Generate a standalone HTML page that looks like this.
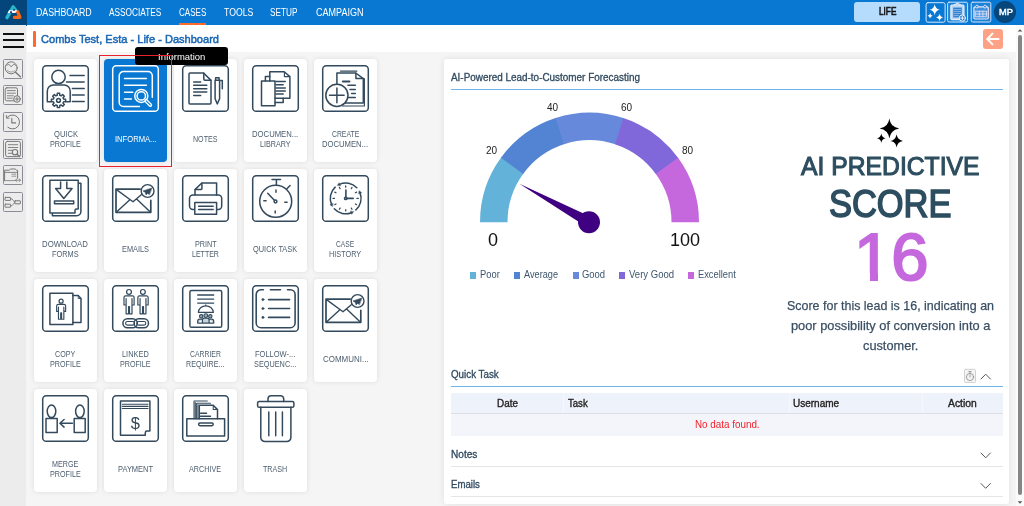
<!DOCTYPE html>
<html lang="en">
<head>
<meta charset="utf-8">
<title>Combs Test, Esta - Life - Dashboard</title>
<style>
*{box-sizing:border-box;margin:0;padding:0}
html,body{width:1024px;height:506px;overflow:hidden}
body{position:relative;background:#f5f5f5;font-family:"Liberation Sans",sans-serif;color:#34495e}
#root{position:absolute;left:0;top:0;width:1024px;height:506px;overflow:hidden;will-change:transform}
.abs{position:absolute}
.t{position:absolute;white-space:nowrap;transform-origin:0 50%}
/* top bar */
#topbar{position:absolute;left:0;top:0;width:1024px;height:25.5px;background:#0878d2}
#logo{position:absolute;left:0;top:0;width:26.8px;height:25.3px;background:#04467c}
.nav{position:absolute;top:0;height:25px;line-height:24px;color:#fff;font-size:10.3px;white-space:nowrap;letter-spacing:-0.15px}
#navul{position:absolute;left:178.9px;top:23.1px;width:27.2px;height:2.4px;background:#ff6a2b}
#life{position:absolute;left:854.1px;top:1.6px;width:66.2px;height:20.6px;background:#b5dcfd;border-radius:3px}
.tbtn{position:absolute;top:2px;width:21px;height:21px;border:1px solid #e6f2fc;border-radius:2px}
#avatar{position:absolute;left:994.2px;top:0.7px;width:22px;height:22px;border-radius:50%;background:#06467b}
/* sub header */
#subhdr{position:absolute;left:27px;top:25px;width:989px;height:27px;background:#fff}
#sidebar{position:absolute;left:0;top:25px;width:26.4px;height:481px;background:#ececec}
#obar{position:absolute;left:33px;top:31px;width:3px;height:16px;background:#ff6a2b;border-radius:1px}
#title{position:absolute;left:40px;top:30px;height:18px;line-height:18px;font-size:11.6px;font-weight:bold;color:#1e64a8;white-space:nowrap}
#back{position:absolute;left:983px;top:29px;width:20px;height:20px;border-radius:3px;background:#fea184}
.ham{position:absolute;left:3px;width:21px;height:2px;background:#111}
.sbi{position:absolute;left:2.9px;width:20.1px;height:20px;border:1px solid #8b8d96;border-radius:1.5px;background:#ececec}
/* cards */
.card{position:absolute;width:63px;height:102.5px;background:#fff;border-radius:4px;box-shadow:0 0 5px rgba(0,0,0,.10)}
.card svg{position:absolute;left:8.1px;top:6.35px;width:47px;height:47px;overflow:visible}
.card .lb{position:absolute;left:0;top:60px;width:63px;height:40px;display:flex;align-items:center;justify-content:center;text-align:center;font-size:8.4px;line-height:10px;color:#4b5d6d;white-space:pre-line}
.card.sel{background:#0878d2;width:63.5px;height:102.8px}
.card.sel .lb{color:#fff}
#selbox{position:absolute;left:98.7px;top:55.4px;width:73.4px;height:111.5px;border:1.8px solid #ea212d}
#tip{position:absolute;left:135px;top:47.2px;width:93.4px;height:18.2px;background:#000;border-radius:3px}
/* panel */
#panel{position:absolute;left:444px;top:59px;width:565.3px;height:444.8px;background:#fff;border-radius:3px;box-shadow:0 0 7px rgba(0,0,0,.09)}
.sect{position:absolute;left:451px;font-size:10px;color:#2c3e50;white-space:nowrap;-webkit-text-stroke:0.25px #2c3e50}
.hl{position:absolute;left:451px;width:552px;height:1px}
.gl{position:absolute;font-size:10.5px;color:#222;white-space:nowrap;transform:translate(-50%,-50%)}
.lg{position:absolute;top:269px;font-size:9.8px;color:#3f556b;white-space:nowrap;line-height:12px}
.lg i{display:inline-block;width:6px;height:6px;margin-right:4px;vertical-align:0px}
.ctr{position:absolute;left:770px;width:240px;text-align:center;white-space:nowrap}
.th{position:absolute;top:393px;height:20px;line-height:20px;font-size:10px;font-weight:bold;color:#222}
/* scrollbar */
#sbar{position:absolute;left:1016px;top:25px;width:8px;height:481px;background:#fafafa}
#thumb{position:absolute;left:1017.7px;top:35.2px;width:4.6px;height:459.8px;background:#858585;border-radius:2.3px}
</style>
</head>
<body>
<div id="root">
<div id="topbar"></div>
<div id="logo"><svg width="27" height="25" viewBox="0 0 27 25" fill="none" stroke-linecap="round" stroke-linejoin="round" style="position:absolute;left:0;top:0">
<path d="M7 17.6L13.2 6.9L15.8 10.4" stroke="#2bb6c9" stroke-width="3.4"/>
<path d="M17.6 11.6L19.9 17.3H14.4" stroke="#f3691c" stroke-width="3.3"/>
<path d="M9 10.2H17.2L15.4 13H7.6Z" fill="#fff"/>
<path d="M11 10.8L12.3 12.2L11 13.6L9.7 12.2ZM14 8.7L15.2 9.9L14 11.1L12.8 9.9Z" fill="#1a2c7a"/>
</svg></div>
<div class="t" style="left:36px;top:6px;font-size:10.0px;line-height:13px;height:13px;transform:scaleX(0.8793);color:#fff;">DASHBOARD</div><div class="t" style="left:109px;top:6px;font-size:10.0px;line-height:13px;height:13px;transform:scaleX(0.8296);color:#fff;">ASSOCIATES</div><div class="t" style="left:179px;top:6px;font-size:10.0px;line-height:13px;height:13px;transform:scaleX(0.8053);color:#fff;">CASES</div><div class="t" style="left:224px;top:6px;font-size:10.0px;line-height:13px;height:13px;transform:scaleX(0.8690);color:#fff;">TOOLS</div><div class="t" style="left:270px;top:6px;font-size:10.0px;line-height:13px;height:13px;transform:scaleX(0.8218);color:#fff;">SETUP</div><div class="t" style="left:316px;top:6px;font-size:10.0px;line-height:13px;height:13px;transform:scaleX(0.9031);color:#fff;">CAMPAIGN</div>
<div id="navul"></div>
<div id="life"></div><div class="t" style="left:879px;top:5px;font-size:10.3px;line-height:13px;height:13px;transform:scaleX(0.7999);color:#111;-webkit-text-stroke:0.6px #111;">LIFE</div>
<svg class="abs" style="left:922px;top:0" width="72" height="25" viewBox="922 0 72 25" fill="none" stroke-linecap="round" stroke-linejoin="round">
<rect x="926.1" y="2.7" width="19" height="19.5" rx="1.8" stroke="#d6eafb" stroke-width="1"/>
<path d="M934.70 4.30Q935.39 9.09 940.00 9.80Q935.39 10.52 934.70 15.30Q934.01 10.52 929.40 9.80Q934.01 9.09 934.70 4.30ZM930.10 12.90Q930.44 15.34 932.70 15.70Q930.44 16.06 930.10 18.50Q929.76 16.06 927.50 15.70Q929.76 15.34 930.10 12.90ZM939.60 13.60Q940.07 16.91 943.20 17.40Q940.07 17.89 939.60 21.20Q939.13 17.89 936.00 17.40Q939.13 16.91 939.60 13.60Z" fill="#fff"/>
<rect x="947.6" y="2.2" width="20" height="19.8" rx="1.5" stroke="#cfe4fb" stroke-width="1" fill="#1b84d8"/>
<rect x="950.9" y="5.2" width="13" height="14.4" rx="1" stroke="#e4eefb" stroke-width="1.3" fill="#b9d3f0"/>
<rect x="953.3" y="7.6" width="8.4" height="9.8" fill="#2a7fd0" stroke="none"/>
<path d="M954.4 9.6H960.6M954.4 11.6H960.6M954.4 13.6H960.6M954.4 15.6H958.5" stroke="#9cc3ec" stroke-width="0.8"/>
<path d="M954.6 5.2V4.2H956.2a1.2 1.2 0 0 1 2.4 0H960.2V5.2" stroke="#e4eefb" stroke-width="1" fill="#b9d3f0"/>
<circle cx="962.3" cy="18.1" r="3.1" fill="#1b78cc" stroke="#fff" stroke-width="0.9"/><path d="M960.6 18.1H964M962.3 16.4V19.8" stroke="#fff" stroke-width="0.9"/>
<rect x="971.2" y="2.2" width="19.6" height="19.8" rx="1.5" stroke="#d9e2fb" stroke-width="1" fill="#1b84d8"/>
<rect x="973.9" y="6.8" width="14.4" height="12.2" rx="1.2" stroke="#e6e9fd" stroke-width="1.2" fill="#3f8fdc"/>
<rect x="975.6" y="11.2" width="11" height="5.6" fill="#5a9ae0" stroke="#dfe4fb" stroke-width="0.9"/>
<path d="M979.3 11.2V16.8M982.9 11.2V16.8M975.6 14H986.6" stroke="#dfe4fb" stroke-width="0.8"/>
<circle cx="977" cy="6.6" r="1.4" stroke="#e6e9fd" stroke-width="0.9" fill="#1b78cc"/><circle cx="985.1" cy="6.6" r="1.4" stroke="#e6e9fd" stroke-width="0.9" fill="#1b78cc"/>
</svg>

<div id="avatar"></div><div class="t" style="left:999px;top:6px;font-size:9.2px;line-height:12px;height:12px;transform:scaleX(1.0072);color:#fff;-webkit-text-stroke:0.45px #fff;">MP</div>

<div id="subhdr"></div>
<div id="sidebar"></div>
<div class="ham" style="top:32.6px"></div>
<div class="ham" style="top:39.1px"></div>
<div class="ham" style="top:45.6px"></div>
<div id="obar"></div>
<div class="t" style="left:41px;top:31px;font-size:11.6px;line-height:16px;height:16px;transform:scaleX(0.9536);color:#1a66b3;-webkit-text-stroke:0.5px #1a66b3;">Combs Test, Esta - Life - Dashboard</div>
<div id="back"><svg width="20" height="20" viewBox="0 0 20 20" fill="none" stroke="#fff" stroke-width="1.9" stroke-linecap="butt" stroke-linejoin="miter" style="position:absolute;left:0;top:0"><path d="M16.3 10H4.6M10 4.2L4.2 10L10 15.8"/></svg></div>

<div class="sbi" style="top:58.5px"><svg viewBox="0 0 20 20" width="20" height="20" fill="none" stroke="#777" stroke-width="1" stroke-linecap="round" stroke-linejoin="round" style="position:absolute;left:-1px;top:-1px"><circle cx="8.2" cy="8.8" r="6"/><path d="M12.6 13.2L17.4 17.8" stroke-width="1.4"/><path d="M4 6.4C4.8 4.6 6 5 8.2 7.8C10.4 5 11.6 4.6 12.4 6.4" stroke-width="1"/><path d="M4.4 11.4C6.4 13.6 10 13.6 12 11.4" stroke-width="0.8" stroke="#8e8e8e"/></svg></div>
<div class="sbi" style="top:85.2px"><svg viewBox="0 0 20 20" width="20" height="20" fill="none" stroke="#777" stroke-width="1" stroke-linecap="round" stroke-linejoin="round" style="position:absolute;left:-1px;top:-1px"><rect x="2.2" y="2.8" width="12.3" height="13" rx="1.6"/><path d="M4.3 5.6H12.4M4.3 8.2H12.4M4.3 10.8H10.4M4.3 13.2H9.4" stroke-width="0.9"/><circle cx="14" cy="14" r="3.3" fill="#e6e6e6"/><path d="M12.2 14H15.8M14 12.2V15.8" stroke-width="0.9"/></svg></div>
<div class="sbi" style="top:111.9px"><svg viewBox="0 0 20 20" width="20" height="20" fill="none" stroke="#777" stroke-width="1" stroke-linecap="round" stroke-linejoin="round" style="position:absolute;left:-1px;top:-1px"><path d="M4.2 5.4A7 7 0 1 1 4.8 15.2"/><path d="M3.4 3.4V6.2H6.2" stroke-width="0.9"/><path d="M8.8 6.2V10.9H12.6" stroke-width="1.1"/></svg></div>
<div class="sbi" style="top:138.6px"><svg viewBox="0 0 20 20" width="20" height="20" fill="none" stroke="#777" stroke-width="1" stroke-linecap="round" stroke-linejoin="round" style="position:absolute;left:-1px;top:-1px"><rect x="2.6" y="2.4" width="14.8" height="15.2" rx="1.8"/><path d="M5.3 5.7H14.7M5.3 8.5H14.7M5.3 11.3H9.6M5.3 14.3H9" stroke-width="0.9"/><circle cx="12" cy="13.2" r="2.7" stroke-width="1.1"/><path d="M14 15.2L16.6 17.6" stroke-width="1.4"/></svg></div>
<div class="sbi" style="top:165.3px"><svg viewBox="0 0 20 20" width="20" height="20" fill="none" stroke="#777" stroke-width="1" stroke-linecap="round" stroke-linejoin="round" style="position:absolute;left:-1px;top:-1px"><path d="M1.6 15.6V5.2H6.2L7.6 4H12.2L13.4 5.2H14.6V13.2"/><path d="M1.8 7.4H14.4" stroke-width="0.9"/><path d="M9 9.2H13.6M9 11.2H13.6" stroke-width="0.8" stroke-dasharray="1.4 1"/><path d="M1.6 15.6H12M12.6 15.2H17.4M13.8 13.9L12.4 15.2L13.8 16.5M16.2 13.9L17.6 15.2L16.2 16.5" stroke-width="0.8"/></svg></div>
<div class="sbi" style="top:192.0px"><svg viewBox="0 0 20 20" width="20" height="20" fill="none" stroke="#777" stroke-width="1" stroke-linecap="round" stroke-linejoin="round" style="position:absolute;left:-1px;top:-1px"><rect x="2" y="5.4" width="5.6" height="3" rx="0.4"/><rect x="2" y="12.2" width="5.6" height="3" rx="0.4"/><rect x="11.8" y="8.8" width="5.6" height="3" rx="0.4"/><path d="M7.6 6.9H9L11.8 10.3L9 13.7H7.6" stroke-width="0.8"/></svg></div>

<div class="card" style="left:33.5px;top:59px"><svg viewBox="0 0 47 47" fill="none" stroke="#33495c" color="#33495c" stroke-width="1.5" stroke-linecap="round" stroke-linejoin="round"><rect x="0.7" y="0.7" width="45.6" height="45.6" rx="3.6"/><circle cx="16.5" cy="11.9" r="6.7"/>
<path d="M9.3 36.7H5.3V26a6 6 0 0 1 6-6H22.2a6 6 0 0 1 6 6V36.7H23.8"/>
<path d="M21.64 34.12L23.60 34.22L23.60 36.58L21.64 36.68L21.04 38.13L22.36 39.59L20.69 41.26L19.23 39.94L17.78 40.54L17.68 42.50L15.32 42.50L15.22 40.54L13.77 39.94L12.31 41.26L10.64 39.59L11.96 38.13L11.36 36.68L9.40 36.58L9.40 34.22L11.36 34.12L11.96 32.67L10.64 31.21L12.31 29.54L13.77 30.86L15.22 30.26L15.32 28.30L17.68 28.30L17.78 30.26L19.23 30.86L20.69 29.54L22.36 31.21L21.04 32.67Z" fill="#fff"/><circle cx="16.5" cy="35.4" r="1.9"/>
<path d="M28 10.6H42.2M24.5 17H42.2M30.4 23.4H42.2M30.4 29.9H42.2M30.4 36.5H42.2" stroke-width="1.47"/></svg></div>
<div class="t" style="left:54px;top:128px;font-size:8.4px;line-height:12px;height:12px;transform:scaleX(0.9022);color:#4d5e6e;">QUICK</div>
<div class="t" style="left:50px;top:138px;font-size:8.4px;line-height:12px;height:12px;transform:scaleX(0.8625);color:#4d5e6e;">PROFILE</div>
<div class="card sel" style="left:103.5px;top:59px"><svg viewBox="0 0 47 47" fill="none" stroke="#fff" color="#fff" stroke-width="1.5" stroke-linecap="round" stroke-linejoin="round"><rect x="0.7" y="0.7" width="45.6" height="45.6" rx="3.6"/><path d="M40.3 32.2V10.7a4.3 4.3 0 0 0-4.3-4.3H11.5a4.3 4.3 0 0 0-4.3 4.3V37.3a4.3 4.3 0 0 0 4.3 4.3H27.4"/>
<path d="M12.5 13.5H34.4M12.5 20.3H34.4M12.5 27.2H20.8M12.5 34H19.4" stroke-width="1.47"/>
<circle cx="29.3" cy="30.9" r="6.5"/><circle cx="29.3" cy="30.9" r="4.2"/>
<path d="M34.2 35.9L38.4 40.1" stroke-width="3.62"/><path d="M34.4 36.1L38.2 39.9" stroke="#0878d2" stroke-width="1.13"/></svg></div>
<div class="t" style="left:115px;top:133px;font-size:8.4px;line-height:12px;height:12px;transform:scaleX(0.9096);color:#fff;">INFORMA...</div>
<div class="card" style="left:173.5px;top:59px"><svg viewBox="0 0 47 47" fill="none" stroke="#33495c" color="#33495c" stroke-width="1.5" stroke-linecap="round" stroke-linejoin="round"><rect x="0.7" y="0.7" width="45.6" height="45.6" rx="3.6"/><path d="M21.6 8H8a1 1 0 0 0-1 1V37.9a1 1 0 0 0 1 1H28a1 1 0 0 0 1-1V15.4Z"/>
<path d="M21.8 8.3V14a1.2 1.2 0 0 0 1.2 1.2H28.8"/>
<path d="M11.7 17.1H18.7M11.7 20.3H24.8M11.7 23.7H24.8M11.7 27H24.8M11.7 30.4H18.7" stroke-width="1.47"/>
<path d="M33.1 15.2V33.8L35.3 38.9L37.6 33.8V15.2ZM33.6 15.2V12.8H37.1V15.2M37.6 15.4H40.3V23.7"/></svg></div>
<div class="t" style="left:193px;top:133px;font-size:8.4px;line-height:12px;height:12px;transform:scaleX(0.8467);color:#4d5e6e;">NOTES</div>
<div class="card" style="left:243.5px;top:59px"><svg viewBox="0 0 47 47" fill="none" stroke="#33495c" color="#33495c" stroke-width="1.5" stroke-linecap="round" stroke-linejoin="round"><rect x="0.7" y="0.7" width="45.6" height="45.6" rx="3.6"/><path d="M17.8 16V6.8H32.2L37.9 11.6V33.3H23"/>
<path d="M32.4 7.2V11.6H37.6" stroke-width="1.13"/>
<path d="M17.8 11.4H13.4V16M23 37.5H31.2V33.3"/>
<rect x="9.5" y="16" width="13.5" height="24.8"/>
<path d="M24 16.5H33.3M24 19.7H31.2M24 22.9H33.3M24 26H33.3M24 29H31.2" stroke-width="1.47"/></svg></div>
<div class="t" style="left:252px;top:128px;font-size:8.4px;line-height:12px;height:12px;transform:scaleX(0.9206);color:#4d5e6e;">DOCUMEN...</div>
<div class="t" style="left:260px;top:138px;font-size:8.4px;line-height:12px;height:12px;transform:scaleX(0.8577);color:#4d5e6e;">LIBRARY</div>
<div class="card" style="left:313.5px;top:59px"><svg viewBox="0 0 47 47" fill="none" stroke="#33495c" color="#33495c" stroke-width="1.5" stroke-linecap="round" stroke-linejoin="round"><rect x="0.7" y="0.7" width="45.6" height="45.6" rx="3.6"/><path d="M18.4 6.1H34.9M42.4 13.5V41H20.5" stroke-width="1.13"/>
<path d="M14.9 19.2V8H33.8L41.3 13.6V38.1H22"/>
<path d="M33.9 8.2V13.5H41.2"/>
<path d="M20.8 16.5H27.5" stroke-width="1.81"/><path d="M25.9 20.3H33.3M28 24.5H33.3M29.6 28.5H33.3M26.6 32.5H33.3" stroke-width="1.47"/>
<circle cx="14.9" cy="30.3" r="11.1" fill="#fff"/>
<path d="M7.5 30.3H22.1M14.9 22.9V37.8"/></svg></div>
<div class="t" style="left:332px;top:128px;font-size:8.4px;line-height:12px;height:12px;transform:scaleX(0.8162);color:#4d5e6e;">CREATE</div>
<div class="t" style="left:322px;top:138px;font-size:8.4px;line-height:12px;height:12px;transform:scaleX(0.9167);color:#4d5e6e;">DOCUMEN...</div>
<div class="card" style="left:33.5px;top:169px"><svg viewBox="0 0 47 47" fill="none" stroke="#33495c" color="#33495c" stroke-width="1.5" stroke-linecap="round" stroke-linejoin="round"><rect x="0.7" y="0.7" width="45.6" height="45.6" rx="3.6"/><path d="M36.2 8.2H38.9V36.6a4.2 4.2 0 0 1-4.2 4.2H10.4V38.1"/>
<path d="M7.9 5.3H36.2V34.1H34.4a1.4 1.4 0 0 0-1.4 1.4V38.1H7.9Z" fill="#fff"/>
<path d="M18.6 7.1V13.5H13.6L21.8 23.5L30.1 13.5H24.8V7.1"/>
<rect x="12.5" y="26.1" width="19.2" height="2.6"/></svg></div>
<div class="t" style="left:42px;top:238px;font-size:8.4px;line-height:12px;height:12px;transform:scaleX(0.9319);color:#4d5e6e;">DOWNLOAD</div>
<div class="t" style="left:52px;top:248px;font-size:8.4px;line-height:12px;height:12px;transform:scaleX(0.8803);color:#4d5e6e;">FORMS</div>
<div class="card" style="left:103.5px;top:169px"><svg viewBox="0 0 47 47" fill="none" stroke="#33495c" color="#33495c" stroke-width="1.5" stroke-linecap="round" stroke-linejoin="round"><rect x="0.7" y="0.7" width="45.6" height="45.6" rx="3.6"/><path d="M28.2 14.1H4V37.3H38.8V25.4" stroke-width="1.7"/>
<path d="M4.5 14.6L21 26.7L29.3 19.8M4.5 37L17.6 25M38.3 37L24.6 24" stroke-width="1.4"/>
<circle cx="35.6" cy="16" r="6.4" stroke-width="1.4"/>
<path d="M39.8 13L30.9 15.9L33.3 17.4L34 20.1L35.5 18.4L37.3 19.5Z" fill="currentColor" stroke-width="0.5"/></svg></div>
<div class="t" style="left:122px;top:243px;font-size:8.4px;line-height:12px;height:12px;transform:scaleX(0.8763);color:#4d5e6e;">EMAILS</div>
<div class="card" style="left:173.5px;top:169px"><svg viewBox="0 0 47 47" fill="none" stroke="#33495c" color="#33495c" stroke-width="1.5" stroke-linecap="round" stroke-linejoin="round"><rect x="0.7" y="0.7" width="45.6" height="45.6" rx="3.6"/><path d="M13 20V14.6L19.8 8H34.6V20"/>
<path d="M19.9 8.3V13.4a1.2 1.2 0 0 1-1.2 1.2H13.3"/>
<rect x="7.5" y="20" width="32.2" height="14.4" rx="3.4"/>
<rect x="12.8" y="27.4" width="21.8" height="11.8" fill="#fff"/>
<path d="M16.6 31.2H31.2M16.6 34.6H31.2" stroke-width="1.47"/></svg></div>
<div class="t" style="left:195px;top:238px;font-size:8.4px;line-height:12px;height:12px;transform:scaleX(0.8651);color:#4d5e6e;">PRINT</div>
<div class="t" style="left:192px;top:248px;font-size:8.4px;line-height:12px;height:12px;transform:scaleX(0.8384);color:#4d5e6e;">LETTER</div>
<div class="card" style="left:243.5px;top:169px"><svg viewBox="0 0 47 47" fill="none" stroke="#33495c" color="#33495c" stroke-width="1.5" stroke-linecap="round" stroke-linejoin="round"><rect x="0.7" y="0.7" width="45.6" height="45.6" rx="3.6"/><circle cx="23.7" cy="26.3" r="16"/>
<path d="M20 4.5H28.5M24.4 4.5V10.2M34.9 13.8L38.1 10.5"/>
<path d="M24 15.1V17.3M23.2 36V38.1M11.8 25.8H14.1M32.8 27.2H35.1" stroke-width="1.47"/>
<path d="M15.7 18.3L22.6 25.4"/><circle cx="23.5" cy="26.5" r="1.4"/></svg></div>
<div class="t" style="left:253px;top:243px;font-size:8.4px;line-height:12px;height:12px;transform:scaleX(0.8842);color:#4d5e6e;">QUICK TASK</div>
<div class="card" style="left:313.5px;top:169px"><svg viewBox="0 0 47 47" fill="none" stroke="#33495c" color="#33495c" stroke-width="1.5" stroke-linecap="round" stroke-linejoin="round"><rect x="0.7" y="0.7" width="45.6" height="45.6" rx="3.6"/><path d="M17.44 9.33A15.4 15.4 0 0 1 34.78 12.70"/>
<path d="M15.43 10.23L17.15 7.71L18.45 10.63Z" fill="currentColor" stroke-width="0.4"/>
<path d="M38.08 17.88A15.4 15.4 0 0 1 33.80 35.02"/>
<path d="M37.29 15.83L39.71 17.68L36.73 18.83Z" fill="currentColor" stroke-width="0.4"/>
<path d="M29.47 37.68A15.4 15.4 0 0 1 12.26 33.70"/>
<path d="M31.51 36.85L29.70 39.31L28.50 36.34Z" fill="currentColor" stroke-width="0.4"/>
<path d="M9.52 29.42A15.4 15.4 0 0 1 13.20 12.14"/>
<path d="M10.38 31.44L7.90 29.67L10.84 28.42Z" fill="currentColor" stroke-width="0.4"/>
<path d="M34.90 23.40L36.30 23.40M33.40 29.00L34.61 29.70M29.30 33.10L30.00 34.31M23.70 34.60L23.70 36.00M18.10 33.10L17.40 34.31M14.00 29.00L12.79 29.70M12.50 23.40L11.10 23.40M14.00 17.80L12.79 17.10M18.10 13.70L17.40 12.49M23.70 12.20L23.70 10.80M29.30 13.70L30.00 12.49M33.40 17.80L34.61 17.10" stroke-width="1.24"/>
<path d="M23.9 15.1V22.2M25 23.4H31.2" stroke-width="1.58"/><circle cx="23.7" cy="23.4" r="1.2"/></svg></div>
<div class="t" style="left:336px;top:238px;font-size:8.4px;line-height:12px;height:12px;transform:scaleX(0.7913);color:#4d5e6e;">CASE</div>
<div class="t" style="left:329px;top:248px;font-size:8.4px;line-height:12px;height:12px;transform:scaleX(0.8722);color:#4d5e6e;">HISTORY</div>
<div class="card" style="left:33.5px;top:279px"><svg viewBox="0 0 47 47" fill="none" stroke="#33495c" color="#33495c" stroke-width="1.5" stroke-linecap="round" stroke-linejoin="round"><rect x="0.7" y="0.7" width="45.6" height="45.6" rx="3.6"/><path d="M30.9 10.6H36.2L39 13.5V37.5H30.9"/><path d="M36.2 10.8V13.5H38.8" stroke-width="0.90"/>
<rect x="7.9" y="8.2" width="23" height="31.3"/>
<circle cx="19.1" cy="16.2" r="2" stroke-width="1.24"/>
<path d="M16.25 19.4H22.05a1.6 1.6 0 0 1 1.6 1.6V26.4H21.85V34.3H19.60V27.9H18.70V34.3H16.45V26.4H14.65V21.0a1.6 1.6 0 0 1 1.6 -1.6ZM16.45 22.0V26.4M21.85 22.0V26.4" stroke-width="1.13"/></svg></div>
<div class="t" style="left:55px;top:348px;font-size:8.4px;line-height:12px;height:12px;transform:scaleX(0.8527);color:#4d5e6e;">COPY</div>
<div class="t" style="left:50px;top:358px;font-size:8.4px;line-height:12px;height:12px;transform:scaleX(0.8597);color:#4d5e6e;">PROFILE</div>
<div class="card" style="left:103.5px;top:279px"><svg viewBox="0 0 47 47" fill="none" stroke="#33495c" color="#33495c" stroke-width="1.5" stroke-linecap="round" stroke-linejoin="round"><rect x="0.7" y="0.7" width="45.6" height="45.6" rx="3.6"/><circle cx="17" cy="6.9" r="2.4" stroke-width="1.24"/><circle cx="30.9" cy="6.9" r="2.4" stroke-width="1.24"/>
<path d="M13.60 10.9H20.50a1.6 1.6 0 0 1 1.6 1.6V20H20.00V28.8H17.50V21.5H16.60V28.8H14.10V20H12.00V12.5a1.6 1.6 0 0 1 1.6 -1.6ZM14.10 13.5V20M20.00 13.5V20" stroke-width="1.19"/>
<path d="M27.45 10.9H34.55a1.6 1.6 0 0 1 1.6 1.6V20H33.95V28.8H31.45V21.5H30.55V28.8H28.05V20H25.85V12.5a1.6 1.6 0 0 1 1.6 -1.6ZM28.05 13.5V20M33.95 13.5V20" stroke-width="1.19"/>
<rect x="10.9" y="33.8" width="14.4" height="9" rx="4.5"/><rect x="13.6" y="36.5" width="9" height="3.6" rx="1.8" stroke-width="1.13"/>
<rect x="22.1" y="33.8" width="14.4" height="9" rx="4.5"/><rect x="24.8" y="36.5" width="9" height="3.6" rx="1.8" stroke-width="1.13"/></svg></div>
<div class="t" style="left:122px;top:348px;font-size:8.4px;line-height:12px;height:12px;transform:scaleX(0.8832);color:#4d5e6e;">LINKED</div>
<div class="t" style="left:120px;top:358px;font-size:8.4px;line-height:12px;height:12px;transform:scaleX(0.8542);color:#4d5e6e;">PROFILE</div>
<div class="card" style="left:173.5px;top:279px"><svg viewBox="0 0 47 47" fill="none" stroke="#33495c" color="#33495c" stroke-width="1.5" stroke-linecap="round" stroke-linejoin="round"><rect x="0.7" y="0.7" width="45.6" height="45.6" rx="3.6"/><rect x="7.9" y="5.5" width="31.8" height="36.8" rx="1.6" stroke-width="1.47"/>
<path d="M15.7 10H31.7M15.7 14.1H31.7M15.7 18.1H31.7" stroke-width="1.36"/>
<path d="M16.4 27.4A7.4 6.6 0 0 1 31.3 27.4ZM23.8 20.6V19.9" stroke-width="1.24"/>
<circle cx="19.2" cy="31.3" r="1.7" stroke-width="1.13" fill="#9fb0bb"/><circle cx="23.8" cy="30.6" r="1.9" stroke-width="1.13" fill="#9fb0bb"/><circle cx="28.3" cy="31.3" r="1.7" stroke-width="1.13" fill="#9fb0bb"/>
<path d="M15.7 38.1V36.2a2 2 0 0 1 2-2H20.6M31.7 38.1V36.2a2 2 0 0 0-2-2H26.9M20.4 38.1V35.2a2 2 0 0 1 2-2H25.1a2 2 0 0 1 2 2V38.1M15.7 38.1H31.7" stroke-width="1.24" fill="#c9d3da"/></svg></div>
<div class="t" style="left:190px;top:348px;font-size:8.4px;line-height:12px;height:12px;transform:scaleX(0.8200);color:#4d5e6e;">CARRIER</div>
<div class="t" style="left:186px;top:358px;font-size:8.4px;line-height:12px;height:12px;transform:scaleX(0.8526);color:#4d5e6e;">REQUIRE...</div>
<div class="card" style="left:243.5px;top:279px"><svg viewBox="0 0 47 47" fill="none" stroke="#33495c" color="#33495c" stroke-width="1.5" stroke-linecap="round" stroke-linejoin="round"><rect x="0.7" y="0.7" width="45.6" height="45.6" rx="3.6"/><path d="M11.4 4.7H9a4.8 4.8 0 0 0-4.8 4.8V37.9a4.8 4.8 0 0 0 4.8 4.8H38.3a4.8 4.8 0 0 0 4.8-4.8V9.5a4.8 4.8 0 0 0-4.8-4.8H35.5M18.4 4.7H28.5" stroke-width="1.58"/>
<circle cx="10.9" cy="14.6" r="1.1" fill="currentColor" stroke-width="0.6"/><circle cx="10.9" cy="23.5" r="1.1" fill="currentColor" stroke-width="0.6"/><circle cx="10.9" cy="32.4" r="1.1" fill="currentColor" stroke-width="0.6"/>
<path d="M16.6 14.6H37.6M16.6 23.5H37.6M16.6 32.4H37.6" stroke-width="1.58"/></svg></div>
<div class="t" style="left:255px;top:348px;font-size:8.4px;line-height:12px;height:12px;transform:scaleX(0.8954);color:#4d5e6e;">FOLLOW-...</div>
<div class="t" style="left:254px;top:358px;font-size:8.4px;line-height:12px;height:12px;transform:scaleX(0.8735);color:#4d5e6e;">SEQUENC...</div>
<div class="card" style="left:313.5px;top:279px"><svg viewBox="0 0 47 47" fill="none" stroke="#33495c" color="#33495c" stroke-width="1.5" stroke-linecap="round" stroke-linejoin="round"><rect x="0.7" y="0.7" width="45.6" height="45.6" rx="3.6"/><path d="M28.2 14.1H4V37.3H38.8V25.4" stroke-width="1.7"/>
<path d="M4.5 14.6L21 26.7L29.3 19.8M4.5 37L17.6 25M38.3 37L24.6 24" stroke-width="1.4"/>
<circle cx="35.6" cy="16" r="6.4" stroke-width="1.4"/>
<path d="M39.8 13L30.9 15.9L33.3 17.4L34 20.1L35.5 18.4L37.3 19.5Z" fill="currentColor" stroke-width="0.5"/></svg></div>
<div class="t" style="left:323px;top:353px;font-size:8.4px;line-height:12px;height:12px;transform:scaleX(0.9509);color:#4d5e6e;">COMMUNI...</div>
<div class="card" style="left:33.5px;top:389px"><svg viewBox="0 0 47 47" fill="none" stroke="#33495c" color="#33495c" stroke-width="1.5" stroke-linecap="round" stroke-linejoin="round"><rect x="0.7" y="0.7" width="45.6" height="45.6" rx="3.6"/><ellipse cx="9.5" cy="16.3" rx="4.3" ry="6.3"/><rect x="4" y="23.5" width="11.2" height="13.9"/>
<ellipse cx="37.9" cy="16.3" rx="4.3" ry="6.3"/><rect x="32.2" y="23.5" width="11" height="13.9"/>
<path d="M30.4 28.3H18M22.1 24.5L17.9 28.3L22.1 32.1"/></svg></div>
<div class="t" style="left:52px;top:458px;font-size:8.4px;line-height:12px;height:12px;transform:scaleX(0.8538);color:#4d5e6e;">MERGE</div>
<div class="t" style="left:50px;top:468px;font-size:8.4px;line-height:12px;height:12px;transform:scaleX(0.8569);color:#4d5e6e;">PROFILE</div>
<div class="card" style="left:103.5px;top:389px"><svg viewBox="0 0 47 47" fill="none" stroke="#33495c" color="#33495c" stroke-width="1.5" stroke-linecap="round" stroke-linejoin="round"><rect x="0.7" y="0.7" width="45.6" height="45.6" rx="3.6"/><path d="M8.5 6.1H37.9V36H35a1.7 1.7 0 0 0-1.7 1.7V40.2H8.5Z"/>
<path d="M10.4 9.3H36M10.4 11.4H36M10.4 13.5H36" stroke-width="1.13"/>
<text x="23.4" y="34.3" text-anchor="middle" font-family="Liberation Sans, sans-serif" font-size="16.5" fill="currentColor" stroke="none">$</text></svg></div>
<div class="t" style="left:118px;top:463px;font-size:8.4px;line-height:12px;height:12px;transform:scaleX(0.8943);color:#4d5e6e;">PAYMENT</div>
<div class="card" style="left:173.5px;top:389px"><svg viewBox="0 0 47 47" fill="none" stroke="#33495c" color="#33495c" stroke-width="1.5" stroke-linecap="round" stroke-linejoin="round"><rect x="0.7" y="0.7" width="45.6" height="45.6" rx="3.6"/><path d="M12 23.7V6.1H25.3M13.3 23.7V7.4M14.6 23.7V8.2H28.5M16 23.7V9.4" stroke-width="1.02"/>
<path d="M17.3 23.7V10.3H31.2L35.5 14.6V23.7" fill="#fff"/>
<path d="M31.2 10.6V14.6H35.2" stroke-width="1.02"/>
<path d="M18.6 18.3H24.5M18.6 21.3H28.5" stroke-width="1.47"/>
<rect x="4.8" y="23.7" width="37.8" height="17.3"/>
<rect x="16.6" y="28" width="14.6" height="2.7" rx="1.35"/></svg></div>
<div class="t" style="left:189px;top:463px;font-size:8.4px;line-height:12px;height:12px;transform:scaleX(0.8623);color:#4d5e6e;">ARCHIVE</div>
<div class="card" style="left:243.5px;top:389px"><svg viewBox="0 0 47 47" fill="none" stroke="#33495c" color="#33495c" stroke-width="1.5" stroke-linecap="round" stroke-linejoin="round"><path d="M16 6.4V3.9a3.2 3.2 0 0 1 3.2-3.2H28.5a3.2 3.2 0 0 1 3.2 3.2V6.4"/>
<rect x="5.6" y="6.4" width="36.3" height="5.9" rx="1.6"/>
<path d="M8.8 12.3V42.4a4.2 4.2 0 0 0 4.2 4.2H34.7a4.2 4.2 0 0 0 4.2-4.2V12.3"/>
<path d="M16.8 17.1V40.8M23.7 17.1V40.8M30.4 17.1V40.8" stroke-width="1.47"/></svg></div>
<div class="t" style="left:263px;top:463px;font-size:8.4px;line-height:12px;height:12px;transform:scaleX(0.8536);color:#4d5e6e;">TRASH</div>
<div id="tip"></div><div class="t" style="left:158px;top:50px;font-size:9.8px;line-height:13px;height:13px;transform:scaleX(0.9648);color:#fff;">Information</div><div id="selbox"></div>

<div id="panel"></div>
<div class="t" style="left:451px;top:71px;font-size:10.0px;line-height:13px;height:13px;transform:scaleX(0.9909);color:#314a60;-webkit-text-stroke:0.3px #314a60;">AI-Powered Lead-to-Customer Forecasting</div>
<div class="hl" style="top:89px;background:#6db3ea"></div>
<svg class="abs" style="left:0;top:0" width="1024" height="506" viewBox="0 0 1024 506"><path d="M480.00 222.20A109.5 109.5 0 0 1 501.30 157.31L523.45 173.60A82 82 0 0 0 507.50 222.20Z" fill="#63b2da"/><path d="M500.91 157.84A109.5 109.5 0 0 1 556.29 117.86L564.63 144.06A82 82 0 0 0 523.16 174.00Z" fill="#5384d4"/><path d="M555.66 118.06A109.5 109.5 0 0 1 623.96 118.26L615.31 144.37A82 82 0 0 0 564.16 144.21Z" fill="#6689dc"/><path d="M623.34 118.06A109.5 109.5 0 0 1 678.47 158.37L656.13 174.40A82 82 0 0 0 614.84 144.21Z" fill="#8168da"/><path d="M678.09 157.84A109.5 109.5 0 0 1 699.00 222.20L671.50 222.20A82 82 0 0 0 655.84 174.00Z" fill="#c568dd"/><path d="M519.40 183.66L592.15 217.38L586.85 227.02Z" fill="#3f0081"/><circle cx="589.0" cy="222.2" r="11" fill="#3f0081"/></svg>
<div class="t" style="left:486px;top:144px;font-size:10px;line-height:13px;height:13px;color:#222;">20</div>
<div class="t" style="left:547px;top:101px;font-size:10px;line-height:13px;height:13px;color:#222;">40</div>
<div class="t" style="left:621px;top:101px;font-size:10px;line-height:13px;height:13px;color:#222;">60</div>
<div class="t" style="left:682px;top:144px;font-size:10px;line-height:13px;height:13px;color:#222;">80</div>
<div class="t" style="left:488px;top:228px;font-size:18px;line-height:24px;height:24px;color:#111;">0</div>
<div class="t" style="left:670px;top:228px;font-size:18px;line-height:24px;height:24px;color:#111;">100</div>
<div class="abs" style="left:469.9px;top:272.2px;width:6.3px;height:6.6px;background:#63b2da"></div>
<div class="t" style="left:480px;top:268px;font-size:10.0px;line-height:13px;height:13px;transform:scaleX(0.9374);color:#3e566d;">Poor</div>
<div class="abs" style="left:513.6px;top:272.2px;width:6.3px;height:6.6px;background:#5384d4"></div>
<div class="t" style="left:524px;top:268px;font-size:10.0px;line-height:13px;height:13px;transform:scaleX(0.9173);color:#3e566d;">Average</div>
<div class="abs" style="left:572.5px;top:272.2px;width:6.3px;height:6.6px;background:#6689dc"></div>
<div class="t" style="left:582px;top:268px;font-size:10.0px;line-height:13px;height:13px;transform:scaleX(0.9443);color:#3e566d;">Good</div>
<div class="abs" style="left:619px;top:272.2px;width:6.3px;height:6.6px;background:#8168da"></div>
<div class="t" style="left:629px;top:268px;font-size:10.0px;line-height:13px;height:13px;transform:scaleX(0.9545);color:#3e566d;">Very Good</div>
<div class="abs" style="left:688.2px;top:272.2px;width:6.3px;height:6.6px;background:#c568dd"></div>
<div class="t" style="left:698px;top:268px;font-size:10.0px;line-height:13px;height:13px;transform:scaleX(0.9316);color:#3e566d;">Excellent</div>
<svg class="abs" style="left:870px;top:112px" width="40" height="40" viewBox="870 112 40 40"><path d="M889.40 118.40Q890.67 127.19 899.20 128.50Q890.67 129.81 889.40 138.60Q888.13 129.81 879.60 128.50Q888.13 127.19 889.40 118.40ZM881.30 133.50Q881.87 137.59 885.70 138.20Q881.87 138.81 881.30 142.90Q880.73 138.81 876.90 138.20Q880.73 137.59 881.30 133.50ZM896.60 134.30Q897.42 140.04 902.90 140.90Q897.42 141.76 896.60 147.50Q895.78 141.76 890.30 140.90Q895.78 140.04 896.60 134.30Z" fill="#000"/></svg>
<div class="t" style="left:801px;top:149px;font-size:26.2px;line-height:34px;height:34px;transform:scaleX(0.9437);color:#2d4e60;-webkit-text-stroke:1.1px #2d4e60;">AI PREDICTIVE</div>
<div class="t" style="left:829px;top:178px;font-size:39.4px;line-height:50px;height:50px;transform:scaleX(0.8736);color:#2d4e60;-webkit-text-stroke:1.6px #2d4e60;">SCORE</div>
<div class="t" style="left:854px;top:214px;font-size:67px;line-height:85px;height:85px;color:#c568dd;-webkit-text-stroke:2.1px #c568dd;">16</div>
<div class="abs" style="left:855px;top:272.5px;width:14.77px;height:10px;background:#fff"></div><div class="abs" style="left:877.83px;top:272.5px;width:13.5px;height:10px;background:#fff"></div>
<div class="t" style="left:787px;top:297px;font-size:13.2px;line-height:17px;height:17px;transform:scaleX(0.9444);color:#3a4f63;-webkit-text-stroke:0.25px #3a4f63;">Score for this lead is 16, indicating an</div>
<div class="t" style="left:791px;top:317px;font-size:13.2px;line-height:17px;height:17px;transform:scaleX(0.9711);color:#3a4f63;-webkit-text-stroke:0.25px #3a4f63;">poor possibility of conversion into a</div>
<div class="t" style="left:863px;top:337px;font-size:13.2px;line-height:17px;height:17px;transform:scaleX(0.9682);color:#3a4f63;-webkit-text-stroke:0.25px #3a4f63;">customer.</div>
<div class="t" style="left:451px;top:368px;font-size:10.0px;line-height:13px;height:13px;transform:scaleX(0.9790);color:#314a60;-webkit-text-stroke:0.3px #314a60;">Quick Task</div>
<div class="hl" style="top:386px;background:#6db3ea"></div>
<div class="abs" style="left:451px;top:393px;width:552px;height:20.5px;background:#eef2fa;border-bottom:1px solid #dcdfe6"></div>
<div class="abs" style="left:451px;top:413.5px;width:552px;height:22px;background:#f3f5fb"></div>
<div class="abs" style="left:563.2px;top:393px;width:1px;height:20px;background:#f6f8fc"></div>
<div class="abs" style="left:789.3px;top:393px;width:1px;height:20px;background:#f6f8fc"></div>
<div class="abs" style="left:921.9px;top:393px;width:1px;height:20px;background:#f6f8fc"></div>
<div class="t" style="left:497px;top:397px;font-size:10.0px;line-height:13px;height:13px;transform:scaleX(0.9894);color:#222;-webkit-text-stroke:0.35px #222;">Date</div>
<div class="t" style="left:568px;top:397px;font-size:10.0px;line-height:13px;height:13px;transform:scaleX(0.9581);color:#222;-webkit-text-stroke:0.35px #222;">Task</div>
<div class="t" style="left:793px;top:397px;font-size:10.0px;line-height:13px;height:13px;color:#222;-webkit-text-stroke:0.35px #222;">Username</div>
<div class="t" style="left:948px;top:397px;font-size:10.0px;line-height:13px;height:13px;transform:scaleX(1.0326);color:#222;-webkit-text-stroke:0.35px #222;">Action</div>
<div class="t" style="left:695px;top:418px;font-size:10px;line-height:13px;height:13px;transform:scaleX(0.9847);color:#f4212c;">No data found.</div>
<div class="t" style="left:451px;top:448px;font-size:10.0px;line-height:13px;height:13px;transform:scaleX(1.0106);color:#314a60;-webkit-text-stroke:0.3px #314a60;">Notes</div>
<div class="hl" style="top:466px;background:#e6e6e6"></div>
<div class="t" style="left:451px;top:478px;font-size:10.0px;line-height:13px;height:13px;transform:scaleX(0.9632);color:#314a60;-webkit-text-stroke:0.3px #314a60;">Emails</div>
<div class="hl" style="top:496px;background:#e6e6e6"></div>
<svg class="abs" style="left:960px;top:365px" width="40" height="130" viewBox="960 365 40 130" fill="none" stroke="#555" stroke-width="1" stroke-linecap="round" stroke-linejoin="round">
<path d="M981 379L985.7 374.2L990.4 379"/>
<path d="M981 453L985.7 457.8L990.4 453"/>
<path d="M981 483.5L985.7 488.3L990.4 483.5"/>
<rect x="964.5" y="369.3" width="11" height="13.2" rx="1" stroke="#d0d0d0" fill="#f5f5f5"/>
<circle cx="970" cy="377" r="3.6" stroke="#8a8a8a" stroke-width="0.8"/><path d="M970 377V374.8M968.8 371.6H971.2M970 371.6V373.3" stroke="#8a8a8a" stroke-width="0.8"/>
</svg>

<div id="sbar"></div>
<div id="thumb"></div>
<svg class="abs" style="left:1016px;top:25px" width="8" height="481" viewBox="1016 25 8 481"><path d="M1017.7 31.6L1020 29.2L1022.3 31.6Z" fill="#555"/><path d="M1017.7 501.2L1020 503.7L1022.3 501.2Z" fill="#555"/></svg>
</div>
</body>
</html>
